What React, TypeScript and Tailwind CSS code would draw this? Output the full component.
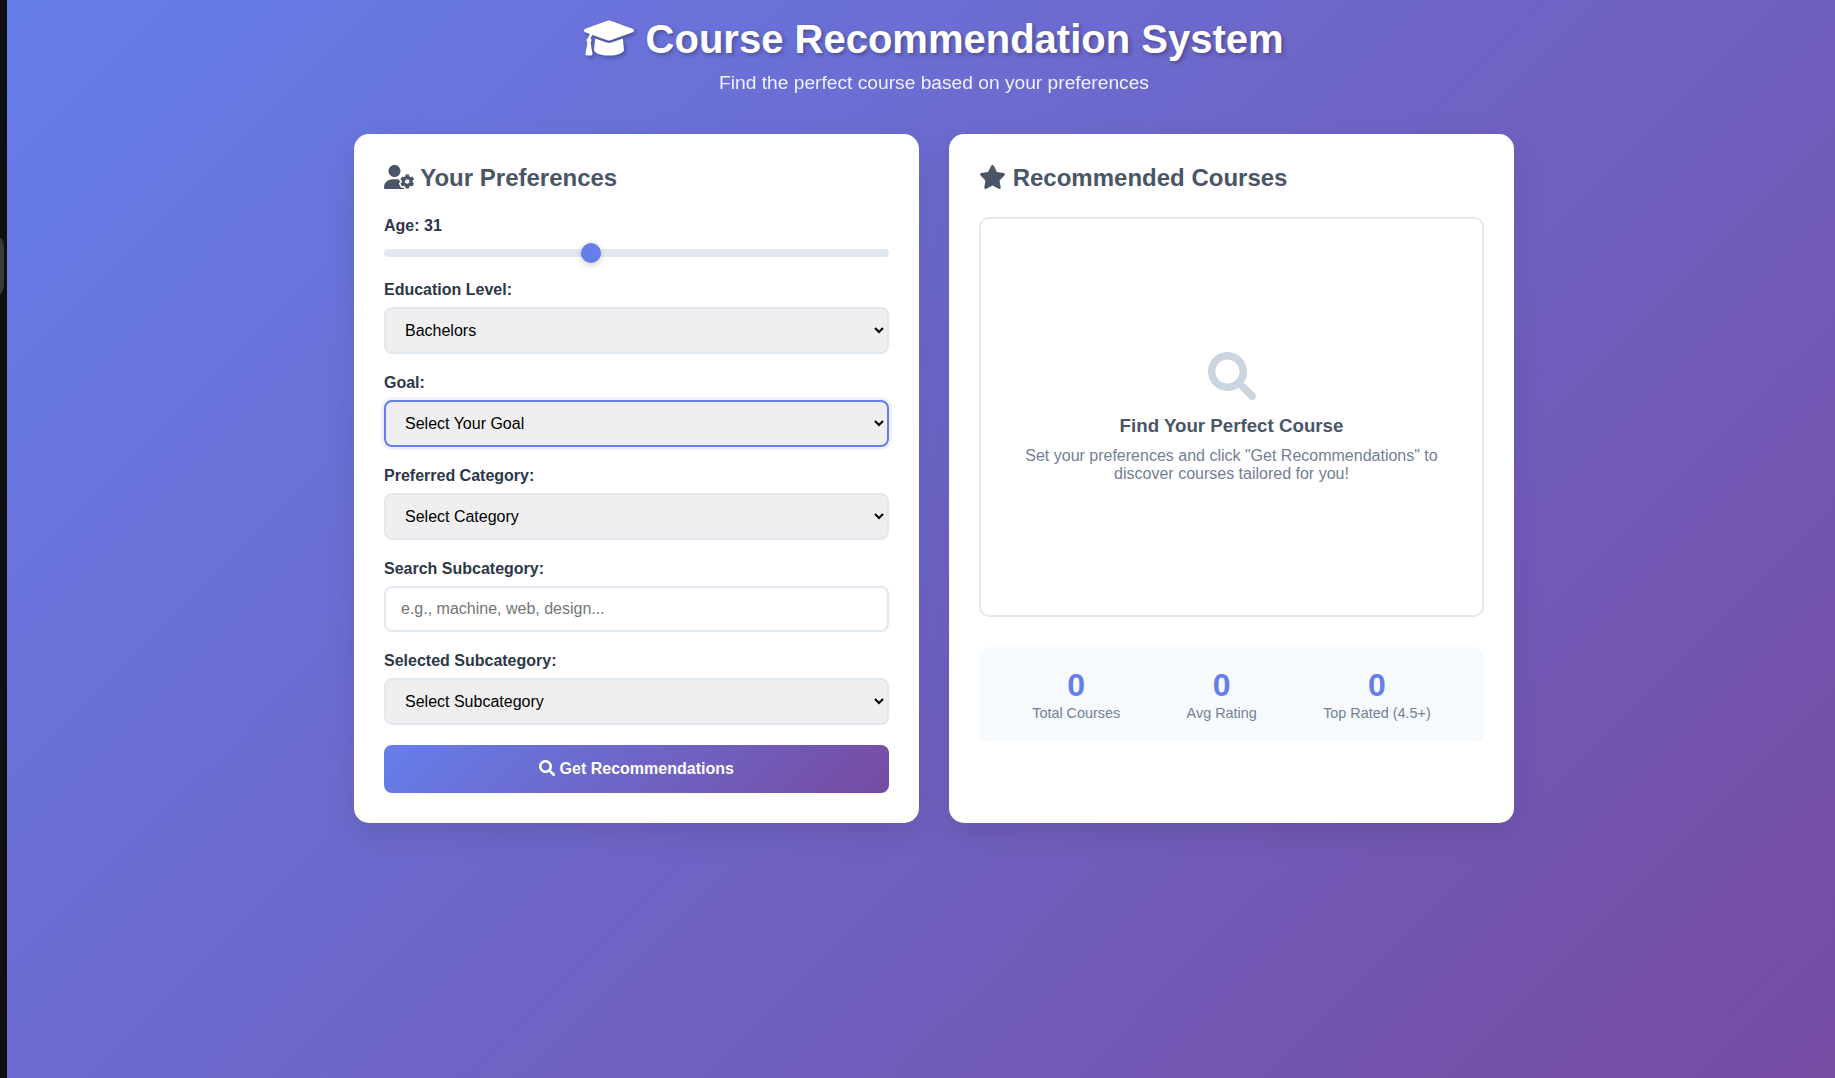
import { useState } from "react";
import type { ReactNode } from "react";

const stats = [
  { value: "0", label: "Total Courses" },
  { value: "0", label: "Avg Rating" },
  { value: "0", label: "Top Rated (4.5+)" },
];

interface IconProps {
  className?: string;
}

function GraduationCapIcon({ className }: IconProps) {
  return (
    <svg viewBox="0 0 640 512" fill="currentColor" className={className} aria-hidden="true">
      <path d="M623.1 136.9l-282.7-101.2c-13.73-4.91-28.7-4.91-42.43 0L16.05 136.9C6.438 140.4 0 149.6 0 160s6.438 19.65 16.05 23.09L76.07 204.6c-11.89 15.8-20.26 34.16-24.55 53.95C40.05 263.4 32 274.8 32 288c0 9.953 4.814 18.49 11.94 24.36l-24.83 149C17.48 471.1 25 480 34.89 480H93.11c9.887 0 17.41-8.879 15.78-18.63l-24.83-149C91.19 306.5 96 297.1 96 288c0-10.29-5.174-19.03-12.72-24.89c4.252-17.76 12.88-33.82 24.94-47.03l190.6 68.23c13.73 4.91 28.7 4.91 42.43 0l282.7-101.2C633.6 179.6 640 170.4 640 160S633.6 140.4 623.1 136.9zM351.1 314.4C341.7 318.1 330.9 320 320 320c-10.92 0-21.69-1.867-32-5.555L142.8 262.5L128 405.3C128 446.6 213.1 480 320 480c105.1 0 192-33.4 192-74.67l-14.78-142.9L351.1 314.4z" />
    </svg>
  );
}

function SearchIcon({ className }: IconProps) {
  return (
    <svg viewBox="0 0 512 512" fill="currentColor" className={className} aria-hidden="true">
      <path d="M500.3 443.7l-119.7-119.7c27.22-40.41 40.65-90.9 33.46-144.7C401.8 87.79 326.8 13.32 235.2 1.723C99.01-15.51-15.51 99.01 1.724 235.2c11.6 91.64 86.08 166.7 177.6 178.9c53.8 7.189 104.3-6.236 144.7-33.46l119.7 119.7c15.62 15.62 40.95 15.62 56.57 0C515.9 484.7 515.9 459.3 500.3 443.7zM79.1 208c0-70.58 57.42-128 128-128s128 57.42 128 128c0 70.58-57.42 128-128 128S79.1 278.6 79.1 208z" />
    </svg>
  );
}

function UserGearIcon({ className }: IconProps) {
  return (
    <svg viewBox="0 0 640 512" fill="currentColor" className={className} aria-hidden="true">
      <path d="M425.1 482.6c-2.303-1.25-4.572-2.559-6.809-3.93l-7.818 4.493c-6.002 3.504-12.83 5.352-19.75 5.352c-10.71 0-21.13-4.492-28.97-12.75c-18.41-20.09-32.29-44.15-40.22-69.9c-5.352-18.06 2.343-36.87 17.83-45.24l8.018-4.669c-.0664-2.621-.0664-5.242 0-7.859l-7.655-4.461c-12.3-6.953-19.4-19.66-19.64-33.38C305.6 306.3 290.4 304 274.7 304H173.3C77.61 304 0 381.7 0 477.4C0 496.5 15.52 512 34.66 512H413.3c5.727 0 10.9-1.727 15.66-4.188c-2.271-4.984-3.86-10.3-3.86-16.06V482.6zM224 256c70.7 0 128-57.31 128-128S294.7 0 224 0C153.3 0 96 57.31 96 128S153.3 256 224 256zM610.5 373.3c2.625-14 2.625-28.5 0-42.5l25.75-15c3-1.625 4.375-5.125 3.375-8.5c-6.75-21.5-18.25-41.13-33.25-57.38c-2.25-2.5-6-3.125-9-1.375l-25.75 14.88c-10.88-9.25-23.38-16.5-36.88-21.25V212.3c0-3.375-2.5-6.375-5.75-7c-22.25-5-45-4.875-66.25 0c-3.25 .625-5.625 3.625-5.625 7v29.88c-13.5 4.75-26 12-36.88 21.25L394.4 248.5c-2.875-1.75-6.625-1.125-9 1.375c-15 16.25-26.5 35.88-33.13 57.38c-1 3.375 .3751 6.875 3.25 8.5l25.75 15c-2.5 14-2.5 28.5 0 42.5l-25.75 15c-3 1.625-4.25 5.125-3.25 8.5c6.625 21.5 18.13 41 33.13 57.38c2.375 2.5 6 3.125 9 1.375l25.88-14.88c10.88 9.25 23.38 16.5 36.88 21.25v29.88c0 3.375 2.375 6.375 5.625 7c22.38 5 45 4.875 66.25 0c3.25-.625 5.75-3.625 5.75-7v-29.88c13.5-4.75 26-12 36.88-21.25l25.75 14.88c2.875 1.75 6.75 1.125 9-1.375c15-16.25 26.5-35.88 33.25-57.38c1-3.375-.3751-6.875-3.375-8.5L610.5 373.3zM496 400.5c-26.75 0-48.5-21.75-48.5-48.5s21.75-48.5 48.5-48.5c26.75 0 48.5 21.75 48.5 48.5S522.8 400.5 496 400.5z" />
    </svg>
  );
}

function StarIcon({ className }: IconProps) {
  return (
    <svg viewBox="0 0 576 512" fill="currentColor" className={className} aria-hidden="true">
      <path d="M381.2 150.3L524.9 171.5C536.8 173.2 546.8 181.6 550.6 193.1C554.4 204.7 551.3 217.3 542.7 225.9L438.5 328.1L463.1 474.7C465.1 486.7 460.2 498.9 450.2 506C440.3 513.1 427.2 514 416.5 508.3L288.1 439.8L159.8 508.3C149 514 135.9 513.1 126 506C116.1 498.9 111.1 486.7 113.2 474.7L137.8 328.1L33.58 225.9C24.97 217.3 21.91 204.7 25.69 193.1C29.46 181.6 39.43 173.2 51.42 171.5L195 150.3L259.4 17.97C264.7 6.995 275.8 0 288.1 0C300.4 0 311.6 6.995 316.9 17.97L381.2 150.3z" />
    </svg>
  );
}

function Card({ icon, title, children }: { icon: ReactNode; title: string; children: ReactNode }) {
  return (
    <section className="h-[689px] rounded-[15px] bg-white p-[30px] shadow-[0_10px_30px_rgba(0,0,0,0.1)]">
      <h2 className="mb-[25px] h-7 text-2xl leading-7 font-bold whitespace-nowrap text-[#4a5568]">
        {icon} {title}
      </h2>
      {children}
    </section>
  );
}

function Field({ label, children }: { label: string; children: ReactNode }) {
  return (
    <div className="mb-5">
      <label className="mb-2 block leading-[18px] font-semibold text-[#2d3748]">{label}</label>
      {children}
    </div>
  );
}

function Select({ text, focused = false }: { text: string; focused?: boolean }) {
  return (
    <select
      className={
        "block h-[47px] w-full rounded-lg border-2 bg-[#efefef] px-[15px] py-3 text-base text-black outline-none " +
        (focused ? "border-[#667eea] shadow-[0_0_0_3px_rgba(102,126,234,0.1)]" : "border-[#e2e8f0]")
      }
    >
      <option>{text}</option>
    </select>
  );
}

export default function App() {
  const [age, setAge] = useState(31);

  return (
    <div className="flex h-[1078px] w-[1835px] overflow-hidden bg-[#0f0f0f] font-['Liberation_Sans',Arial,sans-serif] text-base">
      <aside className="w-[7px] shrink-0 pt-[238px]">
        <div className="h-[56px] w-1 bg-[#3a3a3a] [border-radius:0_4px_4px_0/0_10px_10px_0]" />
      </aside>

      <main className="h-full w-[1854px] shrink-0 bg-[linear-gradient(135deg,#667eea_0%,#764ba2_100%)]">
        <div className="mx-auto w-[1160px]">
          <header className="h-[134px] pt-4 text-center text-white">
            <h1 className="mb-2.5 h-[46px] text-[40px] leading-[46px] font-bold [text-shadow:2px_2px_4px_rgba(0,0,0,0.3)]">
              <GraduationCapIcon className="inline-block h-10 w-[50px] align-[-5px] [filter:drop-shadow(2px_2px_2px_rgba(0,0,0,0.3))]" />{" "}
              Course Recommendation System
            </h1>
            <p className="text-[19.2px] leading-[22px] opacity-90">Find the perfect course based on your preferences</p>
          </header>

          <div className="grid grid-cols-2 gap-[30px]">
            <Card icon={<UserGearIcon className="inline-block h-6 w-[30px] align-[-3px]" />} title="Your Preferences">
              <div className="h-16">
                <label className="block leading-[18px] font-semibold text-[#2d3748]">Age: {age}</label>
                <input
                  type="range"
                  min={18}
                  max={50}
                  value={age}
                  onChange={(e) => setAge(Number(e.target.value))}
                  className="mt-[14px] block h-2 w-full appearance-none rounded-[5px] bg-[#e2e8f0] outline-none [&::-webkit-slider-thumb]:h-5 [&::-webkit-slider-thumb]:w-5 [&::-webkit-slider-thumb]:appearance-none [&::-webkit-slider-thumb]:rounded-full [&::-webkit-slider-thumb]:bg-[#667eea] [&::-webkit-slider-thumb]:shadow-[0_2px_6px_rgba(0,0,0,0.2)]"
                />
              </div>
              <Field label="Education Level:">
                <Select text="Bachelors" />
              </Field>
              <Field label="Goal:">
                <Select text="Select Your Goal" focused />
              </Field>
              <Field label="Preferred Category:">
                <Select text="Select Category" />
              </Field>
              <Field label="Search Subcategory:">
                <input
                  type="text"
                  placeholder="e.g., machine, web, design..."
                  className="block h-[46px] w-full rounded-lg border-2 border-[#e2e8f0] bg-white px-[15px] py-3 placeholder:text-[#757575]"
                />
              </Field>
              <Field label="Selected Subcategory:">
                <Select text="Select Subcategory" />
              </Field>
              <button className="block h-12 w-full rounded-lg bg-[linear-gradient(135deg,#667eea_0%,#764ba2_100%)] leading-[18px] font-semibold text-white">
                <SearchIcon className="inline-block h-4 w-4 align-[-2px]" /> Get Recommendations
              </button>
            </Card>

            <Card icon={<StarIcon className="inline-block h-6 w-[27px] align-[-3px]" />} title="Recommended Courses">
              <div className="flex h-[400px] flex-col items-center justify-center rounded-[10px] border-2 border-[#e2e8f0] px-10 text-center">
                <SearchIcon className="mb-[15px] h-12 w-12 text-[#cbd5e0]" />
                <h3 className="mb-2.5 text-[18.72px] leading-[22px] font-bold text-[#4a5568]">Find Your Perfect Course</h3>
                <p className="leading-[18px] text-[#718096]">
                  Set your preferences and click "Get Recommendations" to discover courses tailored for you!
                </p>
              </div>
              <div className="mt-[30px] flex h-[95px] justify-around rounded-[10px] bg-[#f7fafc] p-5">
                {stats.map((s) => (
                  <div key={s.label} className="text-center">
                    <div className="text-[32px] leading-[37px] font-bold text-[#667eea]">{s.value}</div>
                    <div className="text-[14.4px] leading-[18px] text-[#718096]">{s.label}</div>
                  </div>
                ))}
              </div>
            </Card>
          </div>
        </div>
      </main>
    </div>
  );
}
